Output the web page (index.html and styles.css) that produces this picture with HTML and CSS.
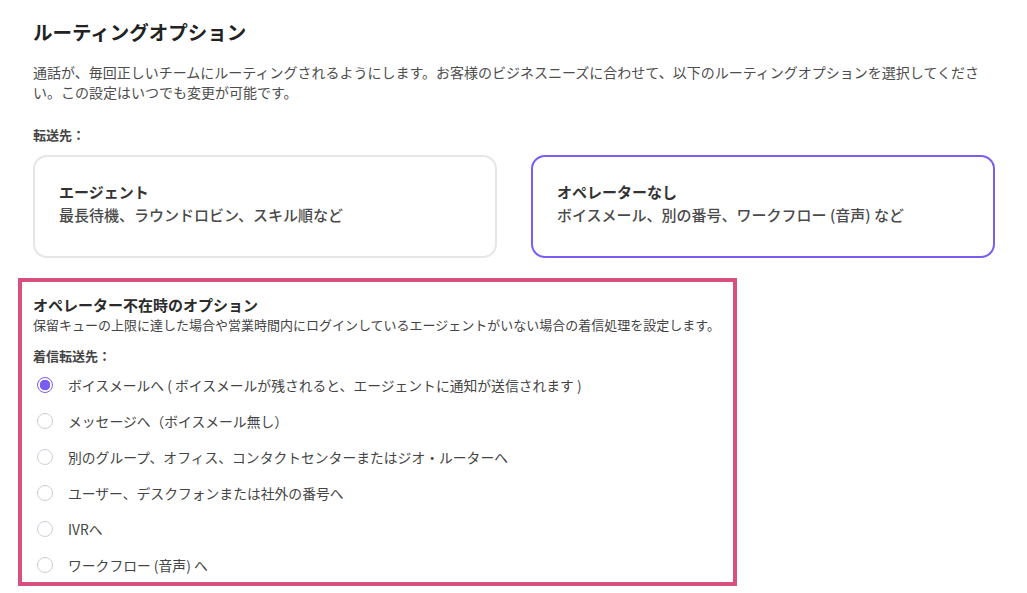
FILE: index.html
```html
<!DOCTYPE html>
<html lang="ja">
<head>
<meta charset="utf-8">
<title>ルーティングオプション</title>
<link rel="stylesheet" href="styles.css">
</head>
<body>
<div class="page">
  <h1 class="title">ルーティングオプション</h1>
  <p class="lead">通話が、毎回正しいチームにルーティングされるようにします。お客様のビジネスニーズに合わせて、以下のルーティングオプションを選択してください。この設定はいつでも変更が可能です。</p>
  <div class="label">転送先：</div>
  <div class="cards">
    <div class="card">
      <div class="card-title">エージェント</div>
      <div class="card-sub">最長待機、ラウンドロビン、スキル順など</div>
    </div>
    <div class="card card-selected">
      <div class="card-title">オペレーターなし</div>
      <div class="card-sub">ボイスメール、別の番号、ワークフロー (音声) など</div>
    </div>
  </div>
  <section class="panel">
    <div class="panel-title">オペレーター不在時のオプション</div>
    <div class="panel-desc">保留キューの上限に達した場合や営業時間内にログインしているエージェントがいない場合の着信処理を設定します。</div>
    <div class="label label-sm">着信転送先：</div>
    <ul class="radios">
      <li class="radio-row"><span class="radio radio-on"></span><span class="radio-text">ボイスメールへ ( ボイスメールが残されると、エージェントに通知が送信されます )</span></li>
      <li class="radio-row"><span class="radio"></span><span class="radio-text">メッセージへ（ボイスメール無し）</span></li>
      <li class="radio-row"><span class="radio"></span><span class="radio-text">別のグループ、オフィス、コンタクトセンターまたはジオ・ルーターへ</span></li>
      <li class="radio-row"><span class="radio"></span><span class="radio-text">ユーザー、デスクフォンまたは社外の番号へ</span></li>
      <li class="radio-row"><span class="radio"></span><span class="radio-text">IVRへ</span></li>
      <li class="radio-row"><span class="radio"></span><span class="radio-text">ワークフロー (音声) へ</span></li>
    </ul>
  </section>
</div>
</body>
</html>
```

FILE: styles.css
```css
* { box-sizing: border-box; }
html, body { margin: 0; padding: 0; background: #ffffff; }
body {
  font-family: "Noto Sans CJK JP", "Noto Sans", sans-serif;
  color: #4a4a4a;
}
.page {
  padding: 18px 32px 0 33px;
}
.title {
  margin: 0 0 16px 0;
  font-size: 19.5px;
  line-height: 28px;
  font-weight: 700;
  color: #222222;
}
.lead {
  margin: 0 0 24px 0;
  font-size: 14px;
  line-height: 20px;
  color: #4d4d4d;
}
.label {
  font-size: 13px;
  line-height: 18px;
  font-weight: 700;
  color: #444444;
}
.cards {
  margin-top: 11px;
  display: grid;
  grid-template-columns: 1fr 1fr;
  gap: 34px;
}
.card {
  height: 103px;
  border: 2px solid #e6e6e6;
  border-radius: 14px;
  padding: 24px 24px 0 24px;
}
.card-selected {
  border-color: #7a5cf6;
}
.card-title {
  font-size: 15px;
  line-height: 22px;
  font-weight: 700;
  color: #333333;
}
.card-sub {
  margin-top: 1px;
  font-size: 15px;
  line-height: 22px;
  font-weight: 500;
  color: #4a4a4a;
}
.panel {
  margin: 20px 0 0 -15px;
  width: 719px;
  border: 4px solid #d9507f;
  padding: 12px 11px 7px 11px;
}
.panel-title {
  font-size: 15px;
  line-height: 21px;
  font-weight: 700;
  color: #2b2b2b;
}
.panel-desc {
  font-size: 13px;
  line-height: 20px;
  color: #444444;
}
.label-sm {
  margin-top: 12px;
}
.radios {
  list-style: none;
  margin: 10px 0 0 0;
  padding: 0;
  display: flex;
  flex-direction: column;
  gap: 16px;
}
.radio-row {
  display: flex;
  align-items: center;
  height: 20px;
  padding-left: 4px;
  gap: 15px;
  font-size: 13.8px;
  color: #444444;
}
.radio {
  width: 16px;
  height: 16px;
  flex: 0 0 16px;
  border-radius: 50%;
  border: 1px solid #cfcfdc;
  background: #ffffff;
}
.radio-on {
  border: 1.5px solid #7a5cf6;
  background: radial-gradient(circle, #7a5cf6 0 5px, #ffffff 5.5px);
}
.radio-text {
  line-height: 20px;
}
```
